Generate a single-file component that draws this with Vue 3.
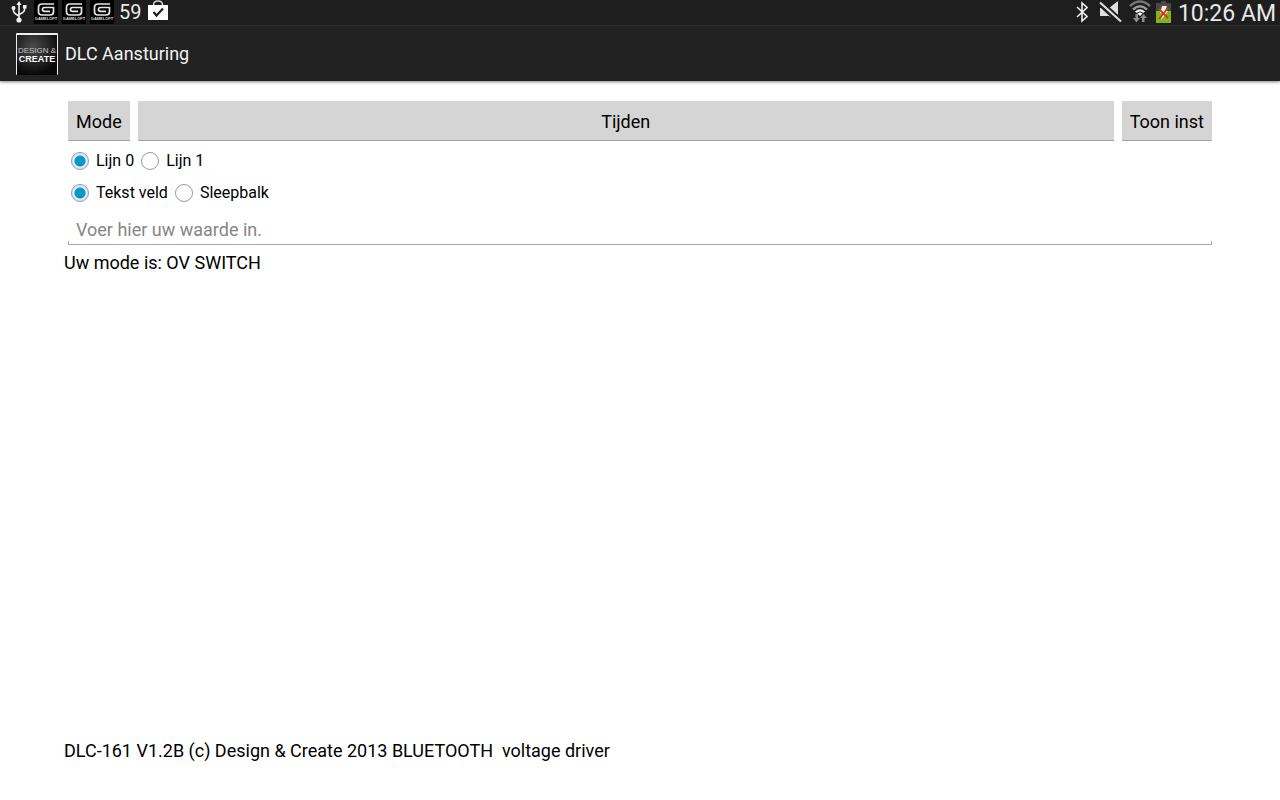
<template>
  <div class="screen">
    <div class="status-bar">
      <div class="notifications">
        <svg class="usb" width="16" height="24" viewBox="0 0 16 24" aria-label="USB">
          <g fill="none" stroke="#f4f4f4" stroke-width="1.6">
            <path d="M8 4V20M2.500 8V11Q2.500 13 8 16M13.500 7V10Q13.500 12 8 14.500" />
          </g>
          <path d="M8 1L10.500 5H5.500Z" fill="#f4f4f4" />
          <circle cx="8" cy="20" r="2.6" fill="#f4f4f4" />
          <circle cx="2.500" cy="8" r="2" fill="#f4f4f4" />
          <rect x="12" y="5" width="3.500" height="3.500" fill="#f4f4f4" />
        </svg>
        <svg v-for="n in 3" :key="n" width="24" height="24" viewBox="0 0 24 24">
          <rect width="24" height="24" fill="#000" />
          <path
            d="M20 4H8Q4.500 4 4.500 7.500V11.500Q4.500 15 8 15H16Q19.500 15 19.500 12V7.500H10.500Q8.500 7.500 8.500 9.500Q8.500 11.300 10.500 11.300H16"
            fill="none"
            stroke="#e6e6e6"
            stroke-width="1.7"
          />
          <text x="12" y="20" text-anchor="middle" class="game-name">GAMELOFT</text>
        </svg>
        <span class="count">59</span>
        <svg width="20" height="24" viewBox="0 0 20 24" aria-label="Store">
          <path d="M5.500 6V5Q5.500 1 10 1Q14.500 1 14.500 5V6" fill="none" stroke="#d5d5d5" stroke-width="1.5" />
          <rect y="5" width="20" height="15" fill="#fff" />
          <path d="M5.500 12L8.500 15.500L15 8.500" fill="none" stroke="#222" stroke-width="2.2" />
        </svg>
      </div>
      <div class="system">
        <svg class="bluetooth" width="12" height="24" viewBox="0 0 12 24" aria-label="Bluetooth">
          <path d="M1 7L11 16.500L6 21V3L11 7.500L1 17" fill="none" stroke="#eee" stroke-width="1.6" />
        </svg>
        <svg class="muted" width="23" height="24" viewBox="0 0 23 24" aria-label="Geluid uit">
          <path d="M1 8H10L19 1V21L10 16H1Z" fill="#dedede" />
          <path d="M-1 1L23 23" stroke="#1e1e1e" stroke-width="6.5" />
          <path d="M1 2.500L22 21.500" stroke="#dedede" stroke-width="2.2" />
        </svg>
        <svg class="wifi" width="22" height="24" viewBox="0 0 22 24" aria-label="Wifi">
          <g fill="none" stroke-width="2.4">
            <path d="M1 6Q11 -3 21 6" stroke="#777" />
            <path d="M4 9.500Q11 3 18 9.500" stroke="#999" />
          </g>
          <path d="M6 11.500Q11 7 16 11.500L14.500 13Q11 10 7.500 13Z" fill="#eee" />
          <path d="M8.500 13.500Q11 11.500 13.500 13.500L11 16Z" fill="#fff" />
          <path d="M6.500 14H9V18H11L7.500 22.500L4 18H6.500ZM13 22V18H11L14.500 14L18 18H15.500V22Z" fill="#8c8c8c" />
        </svg>
        <svg class="battery" width="15" height="24" viewBox="0 0 15 24" aria-label="Batterij">
          <path d="M5 1H10V3H15V23H0V3H5Z" fill="#484848" />
          <rect y="11" width="15" height="12" fill="#7fb51a" />
          <path d="M6 6H11L9 11H12L5 20L7 13H4Z" fill="#f4f1df" />
          <path d="M3 9L12 18M12 8L3 19" stroke="#d93420" stroke-width="1.8" />
        </svg>
        <span class="clock">10:26 AM</span>
      </div>
    </div>

    <header class="action-bar">
      <svg width="42" height="42" viewBox="0 0 42 42" aria-label="Design &amp; Create">
        <defs>
          <radialGradient id="logo-shade" cx="0.4" cy="0.3" r="0.7">
            <stop offset="0" stop-color="#4c4c4c" />
            <stop offset="1" stop-color="#080808" />
          </radialGradient>
        </defs>
        <rect width="42" height="42" rx="1" fill="#eee" />
        <rect x="1" y="2" width="40" height="40" fill="url(#logo-shade)" />
        <text x="21" y="20" text-anchor="middle" class="logo-thin">DESIGN &amp;</text>
        <text x="21" y="29" text-anchor="middle" class="logo-bold">CREATE</text>
      </svg>
      <h1>{{ title }}</h1>
    </header>

    <main class="content">
      <div class="buttons">
        <button type="button">Mode</button>
        <button type="button" class="wide">Tijden</button>
        <button type="button">Toon inst</button>
      </div>

      <div class="radio-group" role="radiogroup" aria-label="Lijn">
        <label v-for="option in lines" :key="option">
          <input v-model="line" type="radio" name="line" :value="option" />
          {{ option }}
        </label>
      </div>
      <div class="radio-group" role="radiogroup" aria-label="Invoer">
        <label v-for="option in inputTypes" :key="option">
          <input v-model="inputType" type="radio" name="input-type" :value="option" />
          {{ option }}
        </label>
      </div>

      <div class="field">
        <input v-model="value" type="text" placeholder="Voer hier uw waarde in." aria-label="Waarde" />
      </div>
      <p>Uw mode is: {{ mode }}</p>
      <p class="version">DLC-161 V1.2B (c) Design &amp; Create 2013 BLUETOOTH&nbsp; voltage driver</p>
    </main>
  </div>
</template>

<script setup>
import { ref } from 'vue'

const title = 'DLC Aansturing'
const lines = ['Lijn 0', 'Lijn 1']
const inputTypes = ['Tekst veld', 'Sleepbalk']

const line = ref('Lijn 0')
const inputType = ref('Tekst veld')
const value = ref('')
const mode = ref('OV SWITCH')
</script>

<style>
body {
  margin: 0;
  background: #fff;
}
</style>

<style scoped>
.screen {
  min-height: 100vh;
  display: flex;
  flex-direction: column;
  font-family: Roboto, "Liberation Sans", sans-serif;
  font-size: 18px;
  line-height: 24px;
  color: #000;
}

/* Status bar */
.status-bar {
  display: flex;
  justify-content: space-between;
  height: 25px;
  padding: 0 4px 0 11px;
  background: #1e1e1e;
  border-bottom: 1px solid #303030;
  color: #e8e8e8;
}

.notifications,
.system {
  display: flex;
  align-items: flex-start;
}

.notifications { gap: 4px; }
.usb { margin-right: 3px; }
.game-name { font: bold 4px "Liberation Sans", sans-serif; fill: #ddd; }
.count { font-size: 20px; margin: 0 3px 0 1px; }

.bluetooth { margin-right: 11px; }
.muted { margin-right: 7px; }
.wifi { margin-right: 5px; }
.battery { margin-right: 7px; }
.clock { font-size: 23px; line-height: 28px; }

/* Action bar */
.action-bar {
  display: flex;
  align-items: center;
  gap: 7px;
  height: 55px;
  padding: 0 16px;
  background: #222;
  color: #f3f3f3;
  box-shadow: 0 1px 3px rgba(0, 0, 0, 0.5);
}

.action-bar h1 {
  margin: 0;
  font-size: 18px;
  font-weight: 400;
}

.logo-thin { font: 8px "Liberation Sans", sans-serif; fill: #c4c4c4; }
.logo-bold { font: bold 9px "Liberation Sans", sans-serif; fill: #fff; }

/* Content */
.content {
  flex: 1;
  display: flex;
  flex-direction: column;
  padding: 20px 5% 37px;
}

.buttons {
  display: flex;
  gap: 8px;
  margin: 0 4px 4px;
}

.buttons button {
  height: 40px;
  padding: 2px 8px 0;
  border: 0;
  border-bottom: 1px solid #a0a0a0;
  border-radius: 1px;
  background: #d5d5d5;
  color: #000;
  font: inherit;
}

.buttons .wide { flex: 1; }

.radio-group {
  display: flex;
  gap: 7px;
  height: 32px;
  padding-left: 7px;
  font-size: 16px;
}

.radio-group label {
  display: flex;
  align-items: center;
  gap: 7px;
}

.radio-group input {
  appearance: none;
  width: 18px;
  height: 18px;
  margin: 0;
  border: 1px solid #999;
  border-radius: 50%;
  background: #fff;
}

.radio-group input:checked {
  background: radial-gradient(circle, #0c98c5 5px, #d8eff8 6px);
}

.field {
  margin: 0 4px;
  padding-bottom: 6px;
}

.field input {
  box-sizing: border-box;
  display: block;
  width: 100%;
  height: 36px;
  padding: 6px 7px 0;
  border: solid #aaa;
  border-width: 0 1px 1px;
  border-image: linear-gradient(transparent 32px, #aaa 32px) 1;
  background: transparent;
  color: #000;
  font: inherit;
  outline: 0;
}

.field input::placeholder { color: #868686; }

p { margin: 0; }
.version { margin-top: auto; }
</style>
